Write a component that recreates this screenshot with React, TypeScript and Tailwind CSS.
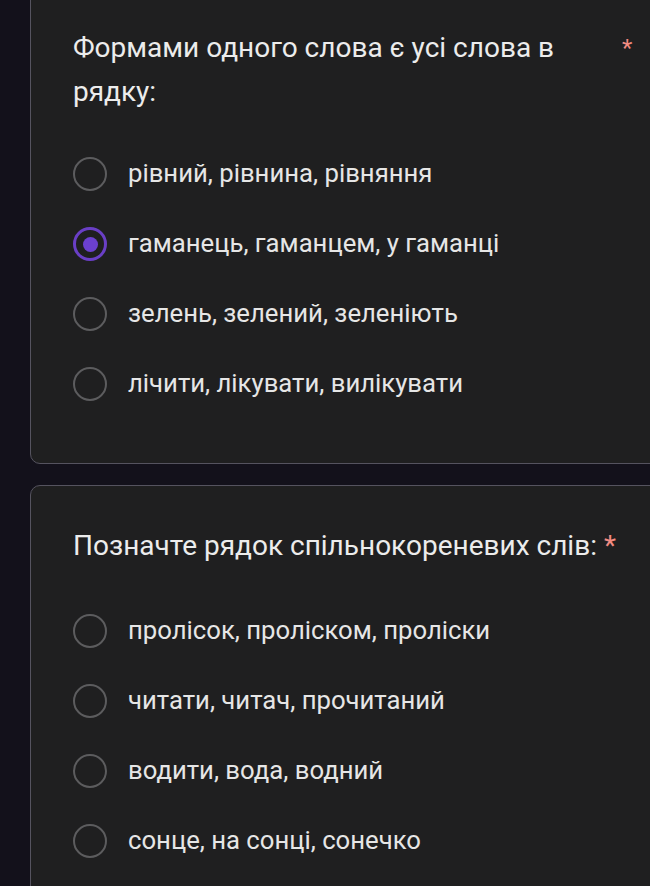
import React from "react";

const font = { fontFamily: "Roboto, 'Noto Sans', 'Liberation Sans', sans-serif" };

function Radio({ checked }: { checked?: boolean }) {
  if (checked) {
    return (
      <div className="w-[34px] h-[34px] rounded-full border-[3px] border-[#6a3fc6] flex items-center justify-center shrink-0">
        <div className="w-[15px] h-[15px] rounded-full bg-[#6b40cf]" />
      </div>
    );
  }
  return <div className="w-[34px] h-[34px] rounded-full border-[2.5px] border-[#5c5c5e] shrink-0" />;
}

function Option({ label, checked }: { label: string; checked?: boolean }) {
  return (
    <div className="h-[70px] flex items-center gap-[21px]">
      <Radio checked={checked} />
      <span className="text-[25.7px] text-[#e6e6e6] leading-none">{label}</span>
    </div>
  );
}

const q1Options = [
  "рівний, рівнина, рівняння",
  "гаманець, гаманцем, у гаманці",
  "зелень, зелений, зеленіють",
  "лічити, лікувати, вилікувати",
];

const q2Options = [
  "пролісок, проліском, проліски",
  "читати, читач, прочитаний",
  "водити, вода, водний",
  "сонце, на сонці, сонечко",
];

export default function App() {
  return (
    <div className="w-[650px] h-[886px] overflow-hidden bg-[#13111b]" style={font}>
      <div className="ml-[30px] w-[640px] -mt-[20px] bg-[#1f1f20] border border-[#55535f] rounded-[10px] pl-[42px] pt-[45px] pb-[44px]">
        <div className="flex items-start">
          <div className="w-[540px] text-[28px] leading-[44px] text-[#ececec]">
            Формами одного слова є усі слова в рядку:
          </div>
          <span className="ml-[9px] text-[24px] leading-[44px] text-[#f28b82]">*</span>
        </div>
        <div className="mt-[25px] flex flex-col">
          {q1Options.map((o, i) => (
            <Option key={o} label={o} checked={i === 1} />
          ))}
        </div>
      </div>
      <div className="ml-[30px] mt-[21px] w-[640px] bg-[#1f1f20] border border-[#55535f] rounded-[10px] pl-[42px] pt-[38px] pb-[42px]">
        <div className="text-[28px] leading-[44px] text-[#ececec]">
          Позначте рядок спільнокореневих слів: <span className="text-[#f28b82]">*</span>
        </div>
        <div className="mt-[28px] flex flex-col">
          {q2Options.map((o) => (
            <Option key={o} label={o} />
          ))}
        </div>
      </div>
    </div>
  );
}
